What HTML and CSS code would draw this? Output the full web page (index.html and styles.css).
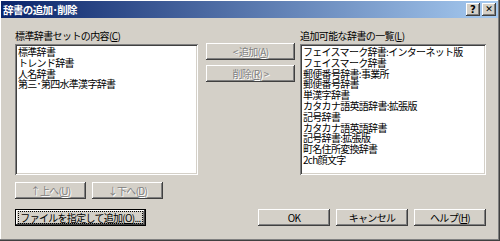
FILE: index.html
```html
<!DOCTYPE html>
<html lang="ja">
<head>
    <meta charset="UTF-8">
    <title>辞書の追加･削除</title>
    <link rel="stylesheet" href="styles.css">
</head>
<body>
    <div class="window">
        <div class="titlebar">
            <span class="title">辞書の追加･削除</span>
            <div class="caption-buttons">
                <span class="cap-btn">?</span>
                <span class="cap-btn close">✕</span>
            </div>
        </div>

        <div class="content">
            <div class="lists">
                <div class="list-col left-col">
                    <div class="label">標準辞書セットの内容(<u>C</u>)</div>
                    <ul class="listbox">
                        <li>標準辞書</li>
                        <li>トレンド辞書</li>
                        <li>人名辞書</li>
                        <li>第三･第四水準漢字辞書</li>
                    </ul>
                </div>

                <div class="mid-buttons">
                    <button class="btn disabled">&lt;&nbsp;追加(<u>A</u>)</button>
                    <button class="btn disabled">削除(<u>R</u>)&nbsp;&gt;</button>
                </div>

                <div class="list-col right-col">
                    <div class="label">追加可能な辞書の一覧(<u>L</u>)</div>
                    <ul class="listbox">
                        <li>フェイスマーク辞書:インターネット版</li>
                        <li>フェイスマーク辞書</li>
                        <li>郵便番号辞書:事業所</li>
                        <li>郵便番号辞書</li>
                        <li>単漢字辞書</li>
                        <li>カタカナ語英語辞書:拡張版</li>
                        <li>記号辞書</li>
                        <li>カタカナ語英語辞書</li>
                        <li>記号辞書:拡張版</li>
                        <li>町名住所変換辞書</li>
                        <li>2ch顔文字</li>
                    </ul>
                </div>
            </div>

            <div class="order-row">
                <button class="btn small disabled">↑上へ(<u>U</u>)</button>
                <button class="btn small disabled">↓下へ(<u>D</u>)</button>
            </div>

            <div class="bottom-row">
                <button class="btn default"><span class="focus">ファイルを指定して追加(<u>O</u>)...</span></button>
                <div class="dialog-buttons">
                    <button class="btn">OK</button>
                    <button class="btn">キャンセル</button>
                    <button class="btn">ヘルプ(<u>H</u>)</button>
                </div>
            </div>
        </div>
    </div>
</body>
</html>
```

FILE: styles.css
```css
/* Dialog frame */
body {
    margin: 0;
    padding: 0;
    background: #d4d0c8;
    font-family: "Noto Sans CJK JP", "DejaVu Sans", sans-serif;
    font-size: 10px;
    color: #000000;
}

.window {
    width: 500px;
    height: 241px;
    box-sizing: border-box;
    padding: 1px 2px 3px 1px;
    background: #d4d0c8;
    box-shadow: inset -1px -1px #404040, inset -2px -2px #808080, inset 1px 1px #ffffff;
}

/* Title bar */
.titlebar {
    height: 17px;
    display: flex;
    align-items: center;
    justify-content: space-between;
    padding: 0 2px 0 2px;
    background: linear-gradient(to right, #0a246a, #a6caf0);
}

.title {
    color: #ffffff;
    font-size: 10.5px;
    font-weight: bold;
    letter-spacing: -0.6px;
    line-height: 17px;
}

.caption-buttons {
    display: flex;
    gap: 2px;
}

.cap-btn {
    width: 14px;
    height: 13px;
    display: flex;
    align-items: center;
    justify-content: center;
    background: #d4d0c8;
    font-family: "DejaVu Sans", sans-serif;
    font-size: 10px;
    font-weight: bold;
    line-height: 1;
    box-shadow: inset -1px -1px #404040, inset 1px 1px #ffffff, inset -2px -2px #808080;
}

.cap-btn.close {
    font-size: 9px;
}

/* Main area */
.content {
    padding: 11px 0 0 14px;
}

.lists {
    display: flex;
}

.label {
    height: 15px;
    line-height: 13px;
    letter-spacing: -0.6px;
}

.listbox {
    list-style: none;
    margin: 0;
    padding: 3px 3px;
    height: 131px;
    box-sizing: border-box;
    background: #ffffff;
    box-shadow: inset 1px 1px #808080, inset -1px -1px #ffffff, inset 2px 2px #404040, inset -2px -2px #d4d0c8;
}

.listbox li {
    height: 10.8px;
    line-height: 10.8px;
    letter-spacing: -0.7px;
    white-space: nowrap;
}

.left-col {
    width: 183px;
}

.right-col {
    width: 186px;
    margin-left: 5px;
}

.mid-buttons {
    display: flex;
    flex-direction: column;
    gap: 5px;
    margin: 14px 0 0 8px;
}

.mid-buttons .btn {
    width: 89px;
}

/* Push buttons */
.btn {
    height: 17px;
    padding: 0;
    border: none;
    background: #d4d0c8;
    font-family: inherit;
    font-size: 10px;
    letter-spacing: -0.7px;
    line-height: 17px;
    color: #000000;
    box-shadow: inset -1px -1px #404040, inset 1px 1px #ffffff, inset -2px -2px #808080, inset 2px 2px #d4d0c8;
}

.btn.disabled {
    color: #808080;
    text-shadow: 1px 1px #ffffff;
}

.order-row {
    display: flex;
    gap: 6px;
    margin-top: 7px;
}

.btn.small {
    width: 71px;
}

.bottom-row {
    display: flex;
    margin-top: 10px;
}

.btn.default {
    width: 131px;
    box-shadow: inset 0 0 0 1px #000000, inset -2px -2px #404040, inset 2px 2px #ffffff, inset -3px -3px #808080;
    display: flex;
    align-items: center;
    justify-content: center;
}

.focus {
    display: block;
    width: 123px;
    height: 11px;
    line-height: 11px;
    outline: 1px dotted #000000;
}

.dialog-buttons {
    display: flex;
    gap: 6px;
    margin-left: 112px;
}

.dialog-buttons .btn {
    width: 72px;
}
```
